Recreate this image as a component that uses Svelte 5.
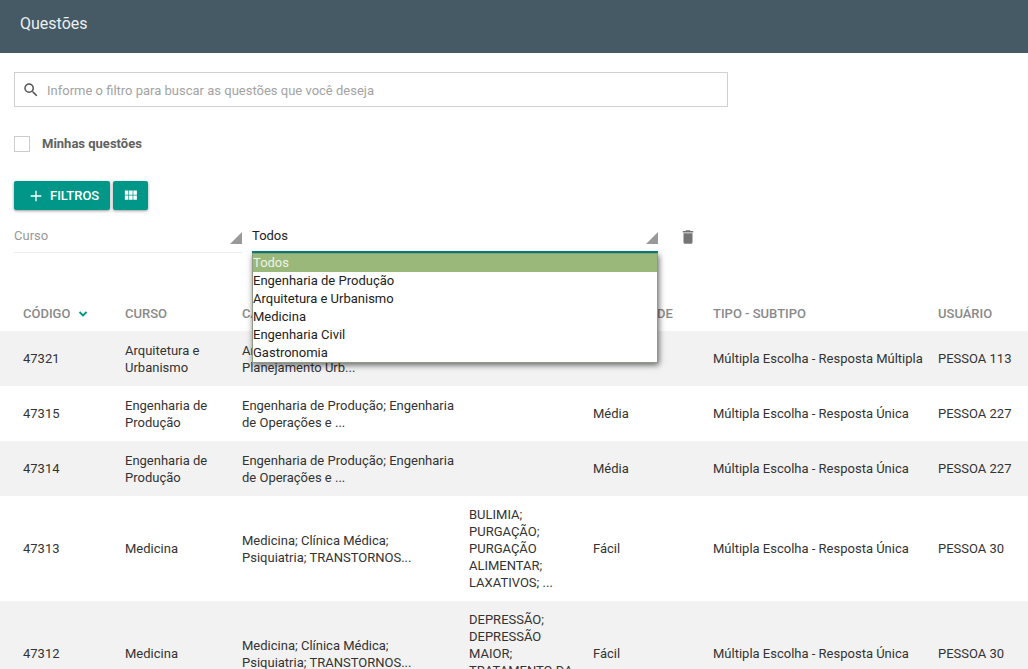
<script>
  const cursos = ['Todos', 'Engenharia de Produção', 'Arquitetura e Urbanismo', 'Medicina', 'Engenharia Civil', 'Gastronomia'];
  let curso = $state('Todos');
  let open = $state(true);
  let filtro = $state('');
  let minhas = $state(false);

  const questoes = [
    { codigo: 47321, curso: 'Arquitetura e Urbanismo', categorias: 'Arquitetura e Urbanismo; Planejamento Urb...', tags: '', dificuldade: 'Fácil', tipo: 'Múltipla Escolha - Resposta Múltipla', usuario: 'PESSOA 113' },
    { codigo: 47315, curso: 'Engenharia de Produção', categorias: 'Engenharia de Produção; Engenharia de Operações e ...', tags: '', dificuldade: 'Média', tipo: 'Múltipla Escolha - Resposta Única', usuario: 'PESSOA 227' },
    { codigo: 47314, curso: 'Engenharia de Produção', categorias: 'Engenharia de Produção; Engenharia de Operações e ...', tags: '', dificuldade: 'Média', tipo: 'Múltipla Escolha - Resposta Única', usuario: 'PESSOA 227' },
    { codigo: 47313, curso: 'Medicina', categorias: 'Medicina; Clínica Médica; Psiquiatria; TRANSTORNOS...', tags: 'BULIMIA; PURGAÇÃO; PURGAÇÃO ALIMENTAR; LAXATIVOS; ...', dificuldade: 'Fácil', tipo: 'Múltipla Escolha - Resposta Única', usuario: 'PESSOA 30' },
    { codigo: 47312, curso: 'Medicina', categorias: 'Medicina; Clínica Médica; Psiquiatria; TRANSTORNOS...', tags: 'DEPRESSÃO; DEPRESSÃO MAIOR; TRATAMENTO DA ...', dificuldade: 'Fácil', tipo: 'Múltipla Escolha - Resposta Única', usuario: 'PESSOA 30' }
  ];

  function choose(c) {
    curso = c;
    open = false;
  }
</script>

<header><h1>Questões</h1></header>

<main>
  <section class="tools">
    <label class="search">
      <svg width="18" height="18" viewBox="0 0 24 24" aria-hidden="true"><path fill="currentColor" d="M15.5 14h-.79l-.28-.27A6.47 6.47 0 0 0 16 9.5 6.5 6.5 0 1 0 9.5 16c1.61 0 3.09-.59 4.23-1.57l.27.28v.79l5 4.99L20.49 19l-4.99-5zm-6 0C7.01 14 5 11.99 5 9.5S7.01 5 9.5 5 14 7.01 14 9.5 11.99 14 9.5 14z" /></svg>
      <input type="text" aria-label="Filtro" placeholder="Informe o filtro para buscar as questões que você deseja" bind:value={filtro} />
    </label>

    <label class="check">
      <input type="checkbox" bind:checked={minhas} />
      <span>Minhas questões</span>
    </label>

    <div class="buttons">
      <button class="primary" type="button">
        <svg width="16" height="16" viewBox="0 0 24 24" aria-hidden="true"><path fill="currentColor" d="M20 13h-7v7h-2v-7H4v-2h7V4h2v7h7z" /></svg>
        FILTROS
      </button>
      <button class="primary icon" type="button" aria-label="Colunas">
        <svg width="17" height="17" viewBox="0 0 24 24" aria-hidden="true"><path fill="currentColor" d="M4 11h5V5H4v6zm0 7h5v-6H4v6zm6 0h5v-6h-5v6zm6 0h5v-6h-5v6zm-6-7h5V5h-5v6zm6-6v6h5V5h-5z" /></svg>
      </button>
    </div>

    <div class="filters">
      <div class="field name">
        <select aria-label="Campo"><option>Curso</option></select>
      </div>
      <div class="field value">
        <select aria-label="Curso" bind:value={curso} onmousedown={(e) => { e.preventDefault(); open = !open; }}>
          {#each cursos as c}<option>{c}</option>{/each}
        </select>
        {#if open}
          <div class="menu" role="listbox" aria-label="Cursos">
            {#each cursos as c}
              <button type="button" role="option" aria-selected={c === curso} onclick={() => choose(c)}>{c}</button>
            {/each}
          </div>
        {/if}
      </div>
      <button class="trash" type="button" aria-label="Remover filtro">
        <svg width="18" height="18" viewBox="0 0 24 24" aria-hidden="true"><path fill="currentColor" d="M6 19c0 1.100.9 2 2 2h8c1.100 0 2-.9 2-2V7H6v12zM19 4h-3.500l-1-1h-5l-1 1H5v2h14V4z" /></svg>
      </button>
    </div>
  </section>

  <table>
    <colgroup>
      <col class="c1" /><col class="c2" /><col class="c3" /><col class="c4" /><col class="c5" /><col class="c6" /><col class="c7" />
    </colgroup>
    <thead>
      <tr>
        <th>CÓDIGO <svg class="sort" width="10" height="8" viewBox="0 0 10 8" aria-hidden="true"><path d="M1.500 2 5 5.500 8.500 2" fill="none" stroke="currentColor" stroke-width="1.800" /></svg></th>
        <th>CURSO</th><th>CATEGORIAS</th><th>TAGS</th><th>DIFICULDADE</th><th>TIPO - SUBTIPO</th><th>USUÁRIO</th>
      </tr>
    </thead>
    <tbody>
      {#each questoes as q}
        <tr>
          <td>{q.codigo}</td><td>{q.curso}</td><td>{q.categorias}</td><td>{q.tags}</td><td>{q.dificuldade}</td><td class="tipo">{q.tipo}</td><td>{q.usuario}</td>
        </tr>
      {/each}
    </tbody>
  </table>
</main>

<style>
  :global(body) {
    background: #fff;
    color: #333;
    font: 13px/17px Roboto, "Liberation Sans", sans-serif;
  }
  header {
    display: flex;
    align-items: center;
    height: 53px;
    padding: 0 20px 6px;
    box-sizing: border-box;
    background: #455a64;
  }
  h1 {
    margin: 0;
    font-size: 16px;
    line-height: 20px;
    font-weight: 400;
    color: #eceff1;
  }
  .tools {
    display: flex;
    flex-direction: column;
    padding: 19px 14px 0;
  }
  .search {
    display: flex;
    align-items: center;
    gap: 7px;
    width: 71.4%;
    height: 35px;
    padding: 0 7px;
    box-sizing: border-box;
    border: 1px solid #d0d0d0;
    color: #555;
  }
  input, select, button {
    font: inherit;
    color: inherit;
  }
  .search input {
    flex: 1;
    min-width: 0;
    padding: 2px 0 0;
    border: 0;
    outline: 0;
    background: none;
  }
  .search input::placeholder {
    color: #a3a3a3;
  }
  .check {
    display: flex;
    align-items: center;
    gap: 12px;
    margin-top: 28px;
    font-weight: 700;
    color: #616161;
  }
  .check input {
    appearance: none;
    width: 16px;
    height: 16px;
    margin: 0;
    border: 1px solid #ccc;
    background: #fff;
  }
  .check input:checked {
    background: #009688;
  }
  .buttons {
    display: flex;
    gap: 3px;
    margin-top: 29px;
  }
  .primary {
    display: flex;
    align-items: center;
    justify-content: center;
    gap: 6px;
    height: 29px;
    padding: 0 11px 0 14px;
    border: 0;
    border-radius: 2px;
    background: #009688;
    color: #fff;
    font-weight: 500;
    box-shadow: 0 1px 3px rgba(0, 0, 0, 0.4);
  }
  .primary.icon {
    padding: 0 9px;
  }
  .filters {
    display: flex;
    margin-top: 10px;
  }
  .field {
    position: relative;
    height: 33px;
    box-sizing: border-box;
  }
  .name {
    width: 22.8%;
    margin-right: 10px;
    border-bottom: 1px solid #eee;
    color: #999;
  }
  .value {
    width: 40.6%;
    border-bottom: 2px solid #00897b;
    color: #222;
  }
  .field::after {
    content: "";
    position: absolute;
    right: 0;
    bottom: 8px;
    border-left: 12px solid transparent;
    border-bottom: 12px solid #999;
    pointer-events: none;
  }
  .value::after {
    bottom: 7px;
  }
  select {
    appearance: none;
    display: block;
    width: 100%;
    height: 31px;
    padding: 0;
    border: 0;
    outline: 0;
    background: none;
  }
  .menu {
    position: absolute;
    z-index: 2;
    top: 33px;
    left: 0;
    right: 0;
    display: flex;
    flex-direction: column;
    border: 1px solid #8f9a80;
    background: #fff;
    box-shadow: 1px 2px 6px rgba(0, 0, 0, 0.6);
  }
  .menu button {
    height: 18px;
    padding: 0;
    border: 0;
    background: none;
    line-height: 18px;
    text-align: left;
  }
  .menu button[aria-selected="true"] {
    background: #9ab87a;
    color: #eef3e8;
  }
  .trash {
    display: flex;
    align-items: center;
    margin-left: 21px;
    padding: 0;
    border: 0;
    background: none;
    color: #757575;
  }
  table {
    width: 100%;
    margin-top: 43px;
    border-collapse: collapse;
    table-layout: fixed;
  }
  .c1 { width: 115px; }
  .c2 { width: 117px; }
  .c3 { width: 227px; }
  .c4 { width: 124px; }
  .c5 { width: 120px; }
  .c6 { width: 225px; }
  .c7 { width: 100px; }
  th, td {
    height: 35px;
    padding: 10px 4px 10px 10px;
    text-align: left;
    vertical-align: middle;
  }
  th {
    padding: 0 4px 0 10px;
    font-weight: 500;
    color: #8a8a8a;
  }
  th:first-child, td:first-child {
    padding-left: 23px;
  }
  .tipo {
    white-space: nowrap;
  }
  .sort {
    margin-left: 4px;
    color: #009688;
  }
  tbody tr:nth-child(odd) {
    background: #f2f2f2;
  }
</style>
